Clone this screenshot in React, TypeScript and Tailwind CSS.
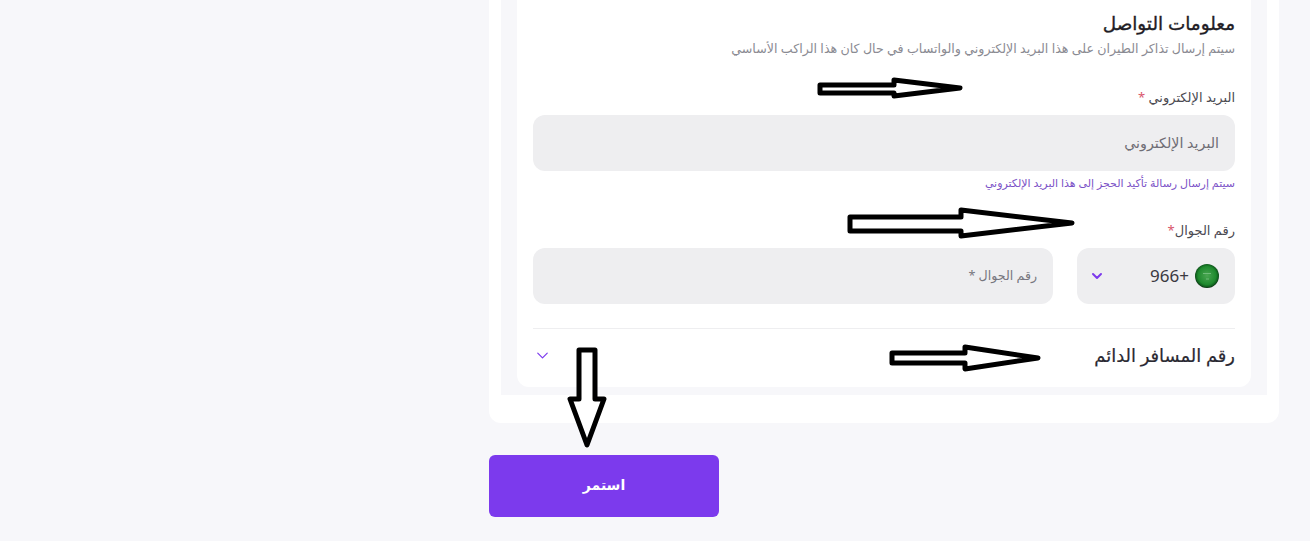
import { ChevronDown } from "lucide-react";

function Arrow({ className, viewBox, points }: { className: string; viewBox: string; points: string }) {
  return (
    <svg className={className} viewBox={viewBox} fill="white" stroke="black" strokeWidth="5" strokeLinejoin="round">
      <polygon points={points} />
    </svg>
  );
}

export default function App() {
  return (
    <div dir="rtl" className="relative h-[541px] w-[1310px] overflow-hidden bg-[#f7f7fa] font-['Noto_Sans','DejaVu_Sans',sans-serif] text-[#1f1d26]">
      <div className="mr-[31px] w-[790px]">
        <div className="rounded-b-xl bg-white px-3 pb-7">
          <div className="bg-[#f7f7fa] px-4 pb-2">
            <div className="h-[387px] rounded-b-xl bg-white px-4">
              <h2 className="pt-[10px] text-[18.4px] leading-[26px] font-medium [-webkit-text-stroke:0.35px_#1f1d26]">معلومات التواصل</h2>
              <p className="mt-[2px] text-[12.65px] leading-5 text-[#8a8a92]">
                سيتم إرسال تذاكر الطيران على هذا البريد الإلكتروني والواتساب في حال كان هذا الراكب الأساسي
              </p>
              <label className="mt-[29px] block text-[13px] leading-5 text-[#4a4951]">
                البريد الإلكتروني <span className="text-[#d9556b]">*</span>
              </label>
              <div className="mt-2 flex h-14 items-center rounded-xl bg-[#eeeef0] px-4 text-[14.25px] text-[#6e6d75]">
                البريد الإلكتروني
              </div>
              <p className="mt-1 text-[11px] leading-[15px] text-[#7b52c7]">سيتم إرسال رسالة تأكيد الحجز إلى هذا البريد الإلكتروني</p>
              <label className="mt-[30px] block text-[13px] leading-5 text-[#4a4951]">
                رقم الجوال<span className="text-[#d9556b]">*</span>
              </label>
              <div className="mt-2 flex gap-6">
                <div className="flex h-14 w-[158px] items-center rounded-xl bg-[#eeeef0] pr-4 pl-3">
                  <svg className="h-6 w-6 shrink-0" viewBox="0 0 24 24">
                    <defs>
                      <radialGradient id="g" cx="50%" cy="48%" r="52%">
                        <stop offset="0%" stopColor="#4aa652" />
                        <stop offset="72%" stopColor="#1f8a2e" />
                        <stop offset="92%" stopColor="#0f5a1c" />
                        <stop offset="100%" stopColor="#06220b" />
                      </radialGradient>
                    </defs>
                    <circle cx="12" cy="12" r="12" fill="url(#g)" />
                    <path d="M8 9.5h8M11 15h3" stroke="#6fbc79" strokeWidth="1.2" />
                  </svg>
                  <span dir="ltr" className="mr-[6px] text-[17px] text-[#3a3941]">966+</span>
                  <ChevronDown className="mr-auto h-4 w-4 text-[#7c3aed]" strokeWidth={3} />
                </div>
                <div className="flex h-14 flex-1 items-center rounded-xl bg-[#eeeef0] px-4 text-[12.6px] text-[#77767e]">رقم الجوال *</div>
              </div>
              <div className="mt-6 flex h-[54px] items-center justify-between border-t border-[#eeeef0]">
                <span className="text-[17.9px] font-medium text-[#2a2932] [-webkit-text-stroke:0.2px_#2a2932]">رقم المسافر الدائم</span>
                <ChevronDown className="h-[19px] w-[19px] text-[#7c3aed]" strokeWidth={1.5} />
              </div>
            </div>
          </div>
        </div>
        <div className="mt-8 mr-auto flex h-[62px] w-[230px] items-center justify-center rounded-md bg-[#7c3aed] pb-1 text-[14px] font-bold text-white">
          <span>استمر</span>
        </div>
      </div>

      <Arrow className="absolute top-[76px] left-[814px] h-[24px] w-[152px]" viewBox="814 76 152 24" points="820,85 894,85 894,80 960,88 894,96 894,93 820,93" />
      <Arrow className="absolute top-[205px] left-[844px] h-[36px] w-[234px]" viewBox="844 205 234 36" points="850,217 961,217 961,210 1072,223 961,236 961,231 850,231" />
      <Arrow className="absolute top-[342px] left-[886px] h-[32px] w-[158px]" viewBox="886 342 158 32" points="892,353 965,353 965,347 1038,358 965,369 965,363 892,363" />
      <Arrow className="absolute top-[344px] left-[564px] h-[108px] w-[46px]" viewBox="564 344 46 108" points="579,350 595,350 595,399 604,399 587,445 570,399 579,399" />
    </div>
  );
}
